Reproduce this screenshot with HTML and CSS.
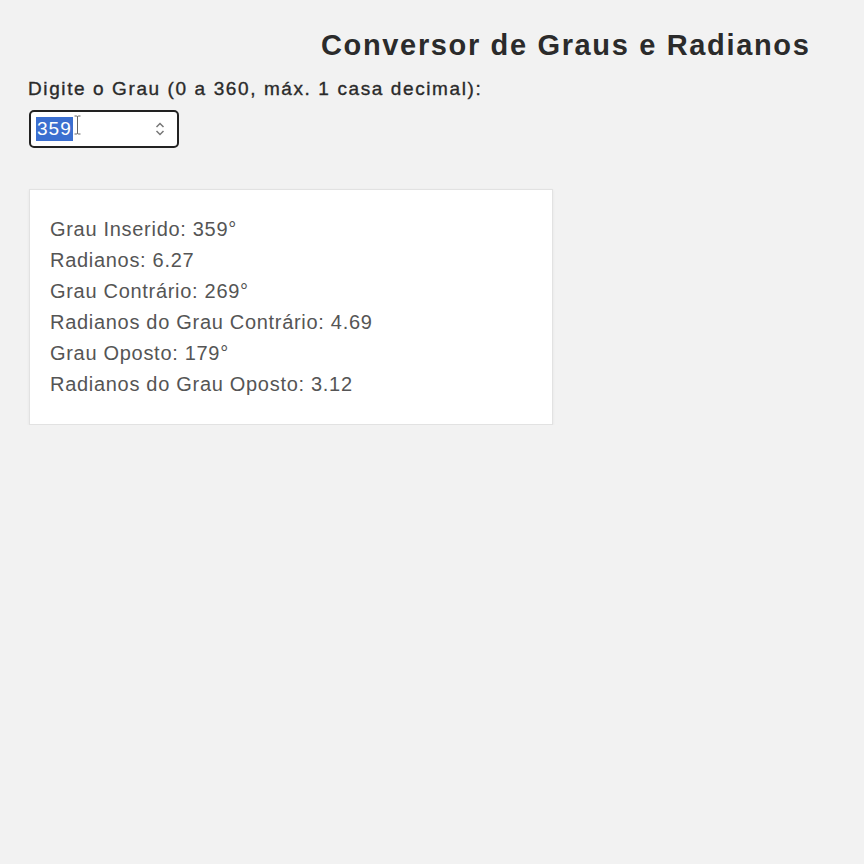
FILE: index.html
```html
<!DOCTYPE html>
<html lang="pt">
<head>
<meta charset="utf-8">
<title>Conversor de Graus e Radianos</title>
<link rel="stylesheet" href="styles.css">
</head>
<body>
<div class="page">
  <h1 class="title">Conversor de Graus e Radianos</h1>
  <label class="label" for="grau">Digite o Grau (0 a 360, máx. 1 casa decimal):</label>
  <div class="input" id="grau">
    <span class="value"><span class="sel">359</span><svg class="caret" width="7" height="20" viewBox="0 0 7 20"><path d="M0.5 1 H2.5 Q3.5 1 3.5 2 V18 Q3.5 19 2.5 19 H0.5 M6.5 1 H4.5 Q3.5 1 3.5 2 M3.5 18 Q3.5 19 4.5 19 H6.5" fill="none" stroke="#666" stroke-width="1"/></svg></span>
    <svg class="spin" width="10" height="16" viewBox="0 0 10 16"><path d="M1.5 6 L5 2.5 L8.5 6" fill="none" stroke="#777" stroke-width="1.5"/><path d="M1.5 10 L5 13.5 L8.5 10" fill="none" stroke="#777" stroke-width="1.5"/></svg>
  </div>
  <div class="result">
    <p>Grau Inserido: 359°</p>
    <p>Radianos: 6.27</p>
    <p>Grau Contrário: 269°</p>
    <p>Radianos do Grau Contrário: 4.69</p>
    <p>Grau Oposto: 179°</p>
    <p>Radianos do Grau Oposto: 3.12</p>
  </div>
</div>
</body>
</html>
```
FILE: styles.css
```css
html, body {
  margin: 0;
  padding: 0;
  background: #f2f2f2;
}
body {
  font-family: "Liberation Sans", Arial, sans-serif;
  color: #333;
}
.page {
  padding: 27px 29px 0 29px;
  display: flex;
  flex-direction: column;
  align-items: flex-start;
}
.title {
  margin: 0 0 0 292px;
  font-size: 29px;
  font-weight: bold;
  letter-spacing: 1.65px;
  color: #2b2b2b;
  line-height: 36px;
}
.label {
  margin-top: 15px;
  font-size: 19px;
  font-weight: normal;
  letter-spacing: 1.6px;
  -webkit-text-stroke: 0.35px #2a2a2a;
  color: #2a2a2a;
  line-height: 22px;
  margin-left: -1px;
}
.input {
  margin-top: 10px;
  width: 150px;
  height: 38px;
  border: 2px solid #222;
  border-radius: 5px;
  background: #fff;
  display: flex;
  align-items: center;
  justify-content: space-between;
  padding: 0 12px 0 5px;
  box-sizing: border-box;
}
.value {
  font-size: 19px;
  display: flex;
  align-items: center;
}
.sel {
  background: #3b6fd0;
  color: #fff;
  padding: 2px 1px 2px 1px;
  line-height: 20px;
  letter-spacing: 1px;
}
.caret {
  display: block;
  margin-left: 1px;
  margin-top: -8px;
}
.spin { display: block; }
.result {
  margin-top: 41px;
  width: 524px;
  box-sizing: border-box;
  background: #fff;
  border: 1px solid #e2e2e2;
  box-shadow: 0 1px 3px rgba(0,0,0,0.06);
  padding: 24px 20px 24px 20px;
}
.result p {
  margin: 0;
  font-size: 20px;
  letter-spacing: 0.7px;
  line-height: 31px;
  color: #555;
}
```
